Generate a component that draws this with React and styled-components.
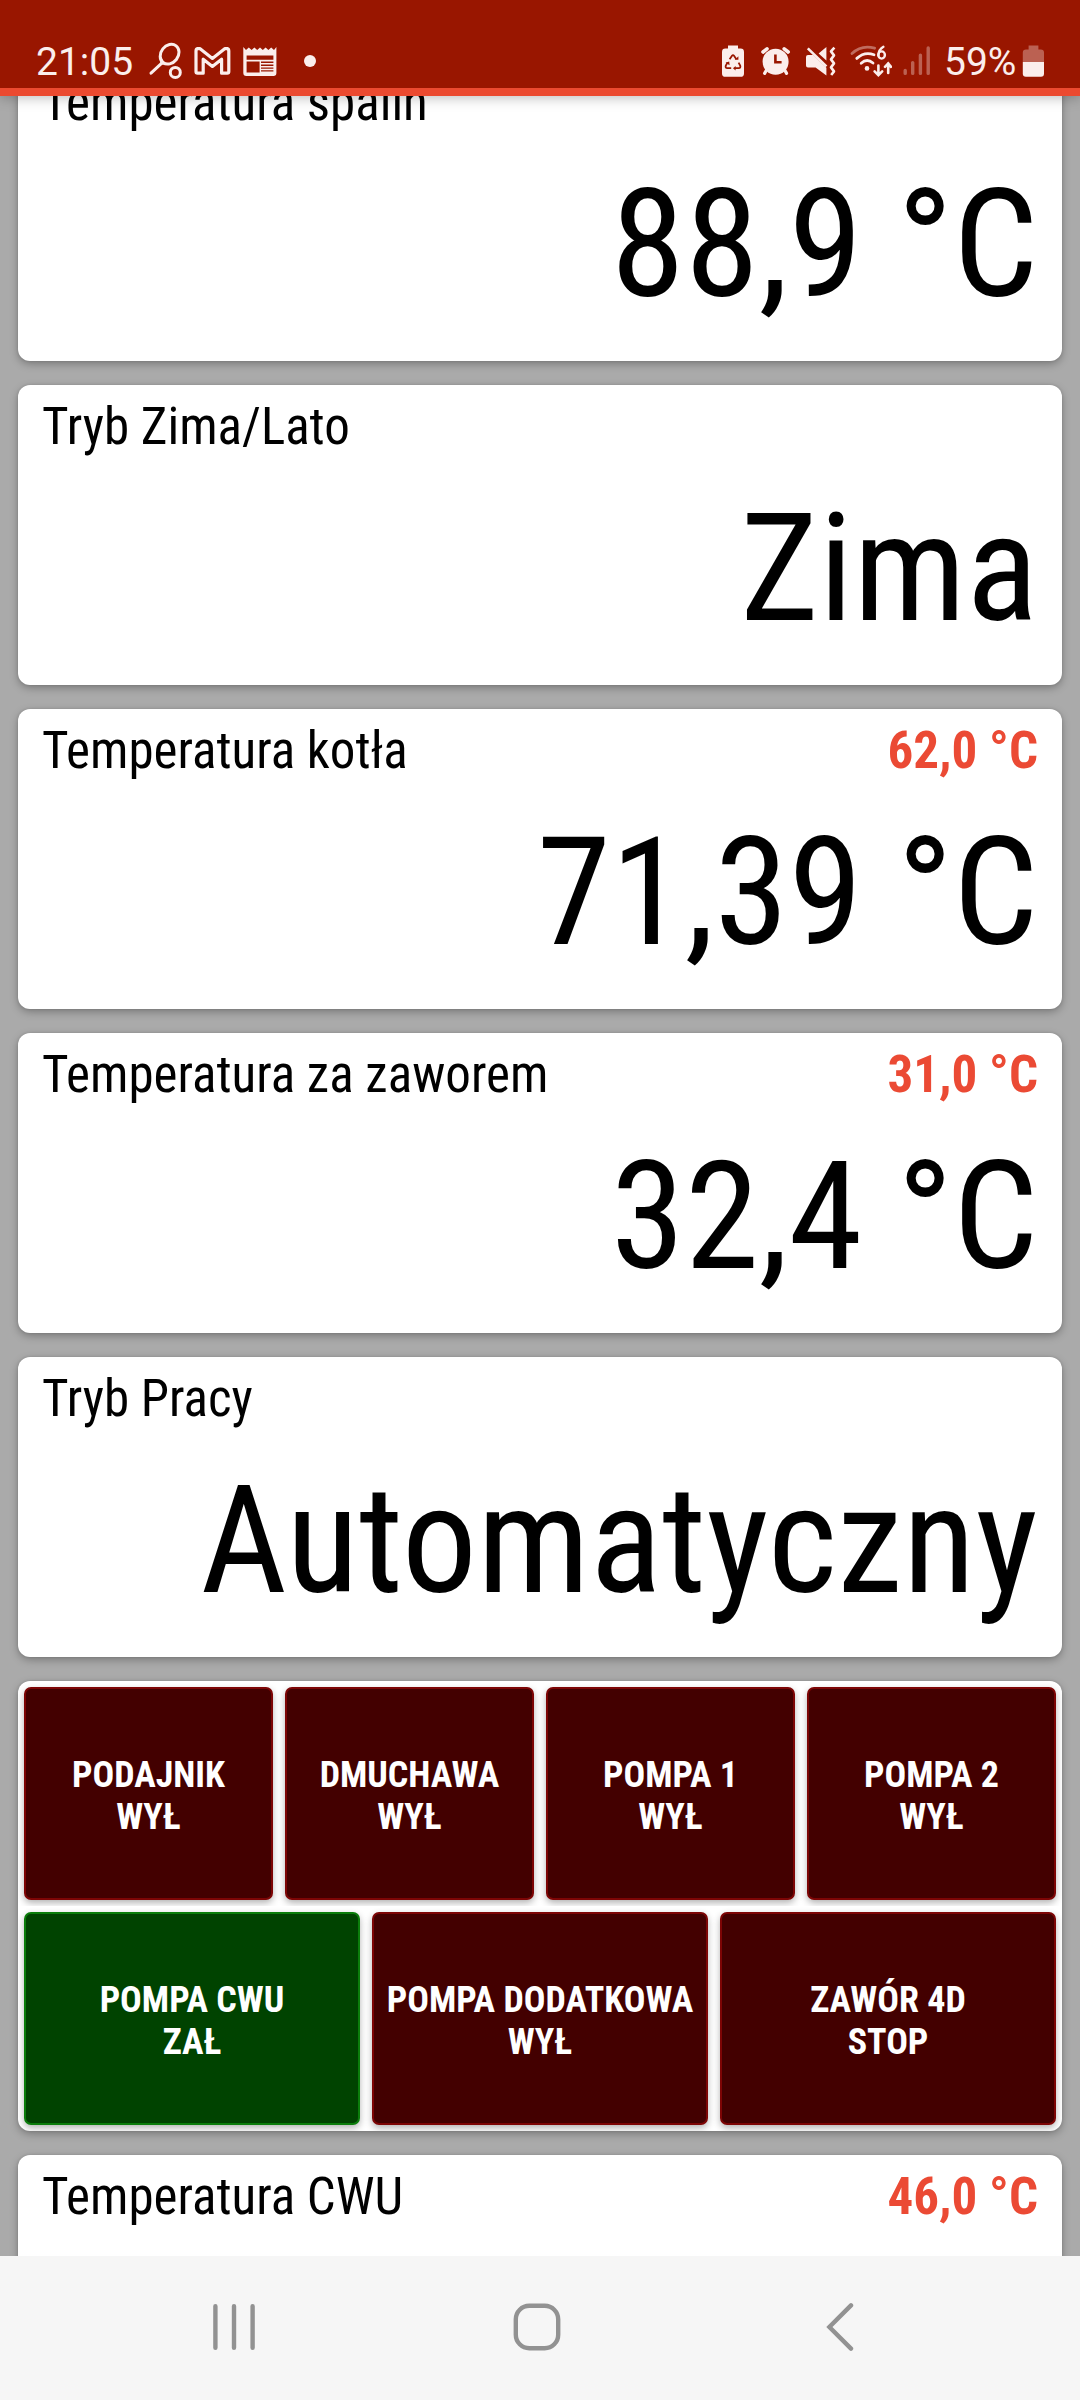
import React from 'react';
import styled, {createGlobalStyle, css} from 'styled-components';

const GlobalStyle = createGlobalStyle`
  * {
    box-sizing: border-box;
  }

  body {
    margin: 0;
    font-family: "Roboto Condensed", Roboto, sans-serif;
    font-stretch: 75%;
    color: #000;
  }
`;

const Screen = styled.div`
  width: 1080px;
  height: 2400px;
  display: flex;
  flex-direction: column;
  overflow: hidden;
  background-color: #aaa;
`;

const StatusBar = styled.header`
  position: relative;
  z-index: 1;
  flex: none;
  height: 96px;
  padding: 42px 35px 0 36px;
  display: flex;
  justify-content: space-between;
  align-items: flex-start;
  background-color: #991600;
  border-bottom: 8px solid #eb4a30;
  box-shadow: 0 2px 12px rgba(0, 0, 0, 0.25);
`;

const StatusGroup = styled.div`
  display: flex;
  align-items: center;
  height: 40px;
  color: #fbeeec;
`;

const StatusText = styled.div`
  width: ${props => props.width}px;
  margin-left: ${props => props.gap || 0}px;
  font-family: Roboto, sans-serif;
  font-stretch: 100%;
  font-size: 39px;
  line-height: 40px;
  white-space: nowrap;
`;

const StatusIcon = styled.svg`
  flex: none;
  display: block;
  height: 40px;
  margin-left: ${props => props.$gap || 0}px;
  fill: none;
`;

const Content = styled.main`
  flex: 1;
  min-height: 0;
  overflow: hidden;
`;

// the list is scrolled a little, so its first card starts under the bar
const List = styled.div`
  margin-top: -35px;
  padding: 0 18px;
  display: flex;
  flex-direction: column;
  gap: 24px;
`;

const Card = styled.section`
  flex: none;
  height: ${props => props.tall ? 450 : 300}px;
  border-radius: 12px;
  background-color: #fff;
  box-shadow: 0 3px 9px rgba(0, 0, 0, 0.28), 0 0 3px rgba(0, 0, 0, 0.12);
  overflow: hidden;
  ${props => !props.tall && css`
    padding: 12px 24px 0;
  `}
`;

const CardHead = styled.div`
  display: flex;
  justify-content: space-between;
  font-size: 51px;
  line-height: 60px;
`;

const Setpoint = styled.div`
  font-weight: 700;
  color: #eb4a34;
`;

const Value = styled.div`
  margin-top: 24px;
  font-size: 150px;
  line-height: 176px;
  text-align: right;
  white-space: nowrap;
`;

const ButtonRow = styled.div`
  height: 225px;
  padding: 6px;
  display: flex;
  gap: 12px;
  overflow: hidden;
`;

const OutputButton = styled.button`
  flex: 1 1 0;
  min-width: 0;
  padding: 4px 0 0;
  border: 2px solid ${props => props.$on ? '#0b7d0b' : '#7d0505'};
  border-radius: 7px;
  background-color: ${props => props.$on ? '#004300' : '#430000'};
  box-shadow: 0 3px 7px rgba(0, 0, 0, 0.3);
  color: #fff;
  font-family: inherit;
  font-stretch: inherit;
  font-size: 36px;
  font-weight: 700;
  line-height: 42px;
  text-align: center;
  white-space: nowrap;
`;

const NavBar = styled.nav`
  flex: none;
  height: 144px;
  padding: 0 89px 2px 82px;
  display: grid;
  grid-template-columns: repeat(3, 1fr);
  align-items: center;
  justify-items: center;
  background-color: #f6f6f6;

  & > svg {
    display: block;
    fill: none;
    stroke: #929292;
    stroke-width: 4.4;
  }
`;

const RacketIcon = () => (
  <StatusIcon width="36" viewBox="0 0 36 40" $gap={15}>
    <g stroke="currentColor" strokeWidth="3" strokeLinecap="round">
      <ellipse cx="21.6" cy="12.2" rx="8.6" ry="10.6" transform="rotate(38 21.6 12.2)"/>
      <path d="M14.6 20.4L3 31.2"/>
      <path d="M13.6 17.5L13.2 21.6L17.6 21.8" strokeWidth="2"/>
      <circle cx="27.3" cy="30.4" r="5"/>
    </g>
  </StatusIcon>
);

const MailIcon = () => (
  <StatusIcon width="37" viewBox="0 0 37 40" $gap={10}>
    <path
      d="M3.6 6.6h2.2L18.4 16.4L31 6.6h2.2q1.6 0.4 1.6 2.4V29.6q0 1.6-1.6 1.6H27.6V17.2L18.4 24.4L9.2 17.2V31.2H3.6q-1.6 0-1.6-1.6V9q0-2 1.6-2.4z"
      stroke="currentColor" strokeWidth="3.2" strokeLinejoin="round"
    />
  </StatusIcon>
);

const NewsIcon = () => (
  <StatusIcon width="34" viewBox="0 0 34 40" $gap={12}>
    <path
      fill="currentColor" fillRule="evenodd"
      d="M0.3 5l2.7 3l2.8-2.6L8.6 8l2.8-2.6L14.2 8l2.8-2.6L19.8 8l2.8-2.6L25.4 8l2.8-2.6L31 8l2.4-3V31q0 3-3 3H3.3q-3 0-3-3zM3.6 13.4v4.4h26.8v-4.4zM3.6 19.6v11h13v-11zM18 19.6v1.5h12.4v-1.5zM18 22.6v1.3h12.4v-1.3zM18 25.4v1.3h12.4v-1.3zM18 28.2v1.3h12.4v-1.3z"
    />
  </StatusIcon>
);

const DotIcon = () => (
  <StatusIcon width="12" viewBox="0 0 12 40" $gap={27}>
    <circle cx="6" cy="19" r="6" fill="currentColor"/>
  </StatusIcon>
);

const RecycleBatteryIcon = () => (
  <StatusIcon width="22" viewBox="0 0 22 40">
    <path fill="currentColor" d="M6 3.4h10v3.2h2.6q3.4 0 3.4 3.4v21.4q0 3.4-3.4 3.4H3.4Q0 34.8 0 31.4V10q0-3.4 3.4-3.4H6z"/>
    <g stroke="#991600" strokeWidth="1.8">
      <path d="M7.6 17.2L10 13.8q1-1.4 2 0L14.4 17.2"/>
      <path d="M16.6 20.6L18.2 23.6q0.8 2.4-1.6 2.6H13"/>
      <path d="M9.2 26.2H5.4q-2.4-0.2-1.6-2.6L5.6 20.4"/>
    </g>
    <path fill="#991600" d="M12.8 17.8h3.6v-3.6zM13.6 24v4.6l-2.6-2.4zM3.6 20.8l3.6-1.4l0.4 3.8z"/>
  </StatusIcon>
);

const AlarmIcon = () => (
  <StatusIcon width="31" viewBox="0 0 31 40" $gap={16}>
    <circle cx="15.6" cy="19.7" r="13" fill="currentColor"/>
    <g stroke="currentColor" strokeLinecap="round">
      <path d="M3 10L7 6.8M28.2 10L24.2 6.8" strokeWidth="3.6"/>
      <path d="M6.4 28.2L4.6 31.4M24.8 28.2L26.6 31.4" strokeWidth="3.2"/>
    </g>
    <path d="M15.4 12.4V20.2H21.6" stroke="#991600" strokeWidth="2.6"/>
  </StatusIcon>
);

const MuteIcon = () => (
  <StatusIcon width="31" viewBox="0 0 31 40" $gap={14}>
    <path fill="currentColor" d="M21.4 5V18.6L13.6 11.4zM3 13H8.2L21.4 25.8V33.4L10.6 25.6H3q-2 0-2-2V15q0-2 2-2z"/>
    <path d="M2.8 6.4L21.4 24.4" stroke="currentColor" strokeWidth="2.6"/>
    <path
      d="M29.4 5.6L26 9.4L29 13.4L26 17.4L29 21.4L26 25.4L29 29.4L26.2 33"
      stroke="currentColor" strokeWidth="2.6" strokeLinejoin="round"
    />
  </StatusIcon>
);

const WifiIcon = () => (
  <StatusIcon width="43" viewBox="0 0 43 40" $gap={13}>
    <g stroke="currentColor" strokeWidth="2.8" strokeLinecap="round">
      <path d="M3 11.6Q12.4 2.6 25.6 6.2" opacity="0.4"/>
      <path d="M7.8 16.4Q15.6 9.2 25 12.8"/>
      <path d="M12.2 21.2Q18 16 24 21"/>
      <path d="M34.4 4.8Q29.6 7.6 29.4 13.2" strokeWidth="2.4"/>
      <ellipse cx="32.6" cy="13" rx="3.3" ry="3.6" strokeWidth="2.4"/>
      <path d="M29.4 23.6V33M25.6 29.4L29.4 33.2L33.2 29.4" strokeWidth="2.6"/>
      <path d="M39.2 31V21.4M36 24.8L39.2 21.4L42 24.8" strokeWidth="2.6"/>
    </g>
    <circle cx="18" cy="26.4" r="2.3" fill="currentColor"/>
  </StatusIcon>
);

const SignalIcon = () => (
  <StatusIcon width="28" viewBox="0 0 28 40" $gap={11}>
    <path
      d="M2.2 28.4V31.4M9.7 20.6V31.4M17.4 13.2V31.4M25.2 6V31.4"
      stroke="currentColor" strokeWidth="3.4" strokeLinecap="round" opacity="0.35"
    />
  </StatusIcon>
);

const BatteryIcon = () => (
  <StatusIcon width="23" viewBox="0 0 23 40" $gap={5}>
    <path fill="currentColor" opacity="0.35" d="M6.6 3.4h9.8v4h2.4q3.2 0 3.2 3.2V20H0.8V10.6q0-3.2 3.2-3.2h2.6z"/>
    <path fill="currentColor" d="M0.8 20H22V31.8q0 3-3 3H3.8q-3 0-3-3z"/>
  </StatusIcon>
);

const readings = [
  {label: 'Temperatura spalin', value: '88,9 °C'},
  {label: 'Tryb Zima/Lato', value: 'Zima'},
  {label: 'Temperatura kotła', value: '71,39 °C', setpoint: '62,0 °C'},
  {label: 'Temperatura za zaworem', value: '32,4 °C', setpoint: '31,0 °C'},
  {label: 'Tryb Pracy', value: 'Automatyczny'},
];

const outputs = [
  [
    {name: 'PODAJNIK', state: 'WYŁ'},
    {name: 'DMUCHAWA', state: 'WYŁ'},
    {name: 'POMPA 1', state: 'WYŁ'},
    {name: 'POMPA 2', state: 'WYŁ'},
  ],
  [
    {name: 'POMPA CWU', state: 'ZAŁ', on: true},
    {name: 'POMPA DODATKOWA', state: 'WYŁ'},
    {name: 'ZAWÓR 4D', state: 'STOP'},
  ],
];

const Reading = ({label, value, setpoint}) => (
  <Card>
    <CardHead>
      <div>{label}</div>
      {setpoint && <Setpoint>{setpoint}</Setpoint>}
    </CardHead>
    {value && <Value>{value}</Value>}
  </Card>
);

const App = () => (
  <Screen>
    <GlobalStyle/>
    <StatusBar>
      <StatusGroup>
        <StatusText width={97}>21:05</StatusText>
        <RacketIcon/>
        <MailIcon/>
        <NewsIcon/>
        <DotIcon/>
      </StatusGroup>
      <StatusGroup>
        <RecycleBatteryIcon/>
        <AlarmIcon/>
        <MuteIcon/>
        <WifiIcon/>
        <SignalIcon/>
        <StatusText width={73} gap={13}>59%</StatusText>
        <BatteryIcon/>
      </StatusGroup>
    </StatusBar>
    <Content>
      <List>
        {readings.map(reading => (
          <Reading key={reading.label} {...reading}/>
        ))}
        <Card tall>
          {outputs.map((row, k) => (
            <ButtonRow key={k}>
              {row.map(({name, state, on}) => (
                <OutputButton key={name} $on={on}>
                  {name}<br/>{state}
                </OutputButton>
              ))}
            </ButtonRow>
          ))}
        </Card>
        <Reading label="Temperatura CWU" setpoint="46,0 °C"/>
      </List>
    </Content>
    <NavBar>
      <svg width="48" height="48" viewBox="0 0 48 48">
        <path d="M5.4 3.2V44.8M24 3.2V44.8M42.6 3.2V44.8" strokeLinecap="round"/>
      </svg>
      <svg width="48" height="48" viewBox="0 0 48 48">
        <rect x="2.8" y="2.8" width="42.4" height="42.4" rx="13.5"/>
      </svg>
      <svg width="28" height="48" viewBox="0 0 28 48">
        <path d="M25 2.4L3.4 24L25 45.6" strokeLinecap="round"/>
      </svg>
    </NavBar>
  </Screen>
);

export default App;
